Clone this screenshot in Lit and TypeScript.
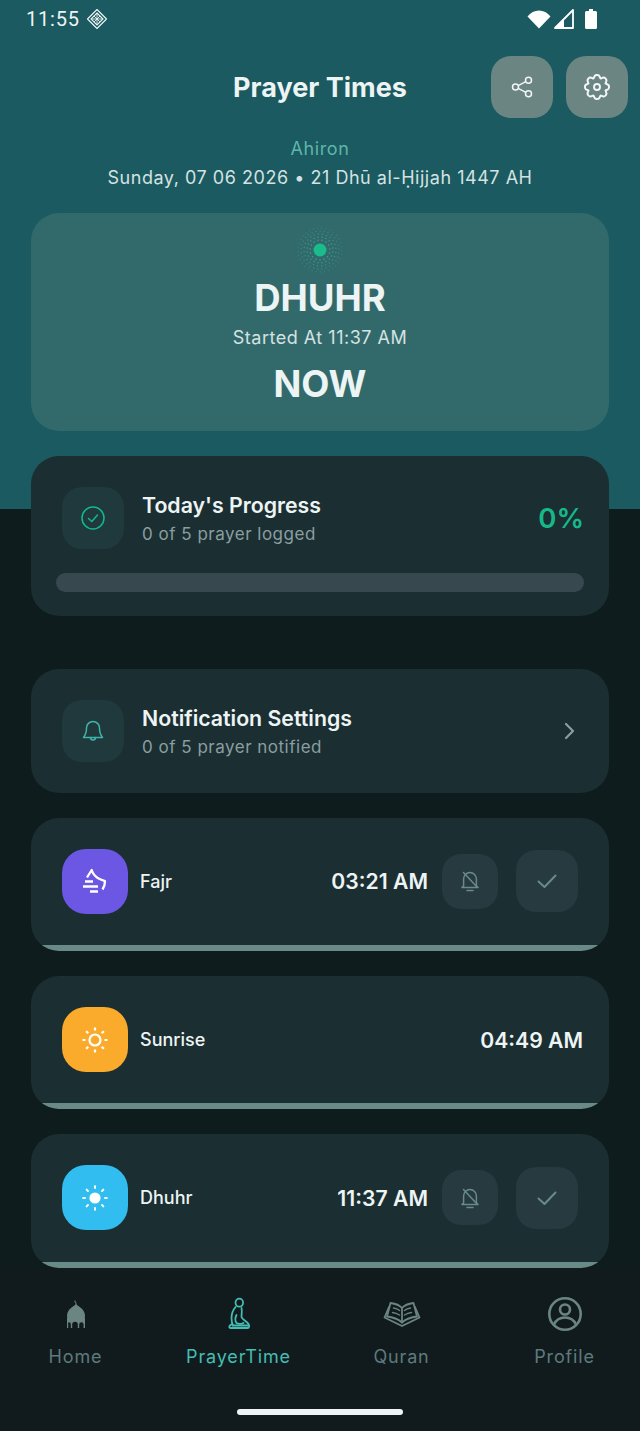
import { LitElement, html, css, svg } from 'lit';
import { customElement } from 'lit/decorators.js';

const gearPath = (cx: number, cy: number, outer: number, inner: number, lobes: number) => {
    let d = '';
    for (let i = 0; i < lobes; i++) {
        const step = (Math.PI * 2) / lobes;
        const a = i * step - Math.PI / 2;
        const pt = (r: number, t: number) => `${(cx + r * Math.cos(t)).toFixed(2)} ${(cy + r * Math.sin(t)).toFixed(2)}`;
        if (i === 0) d += `M${pt(inner, a - step / 2)}`;
        d += `C${pt(inner + 0.6, a - step * 0.36)} ${pt(outer + 0.8, a - step * 0.3)} ${pt(outer, a)}`;
        d += `C${pt(outer + 0.8, a + step * 0.3)} ${pt(inner + 0.6, a + step * 0.36)} ${pt(inner, a + step / 2)}`;
    }
    return d + 'Z';
};

const rays = (cx: number, cy: number, r1: number, r2: number) =>
    [0, 45, 90, 135, 180, 225, 270, 315].map((deg) => {
        const t = (deg * Math.PI) / 180;
        return svg`<line x1=${cx + r1 * Math.cos(t)} y1=${cy + r1 * Math.sin(t)} x2=${cx + r2 * Math.cos(t)} y2=${cy + r2 * Math.sin(t)} />`;
    });

const haloDots = () => {
    const out = [];
    for (const r of [10, 13, 16, 19, 22]) {
        const n = Math.round(r * 1.5);
        for (let i = 0; i < n; i++) {
            const t = (i / n + r / 40) * Math.PI * 2;
            out.push(svg`<circle cx=${25 + r * Math.cos(t)} cy=${25 + r * Math.sin(t)} r="0.75" fill="#3cc9a2" opacity=${0.95 - r / 30} />`);
        }
    }
    return out;
};

const bellOff = html`<svg width="20" height="22" viewBox="0 0 20 22" fill="none" stroke="currentColor" stroke-width="1.5" stroke-linecap="round" stroke-linejoin="round">
    <path d="M3.6 16V9a6.4 6.4 0 0 1 12.8 0v7l1.6 1.4H2z" />
    <path d="M7 20.6h6" />
    <path d="M3.5 2.5 17 17" />
</svg>`;

const checkIcon = html`<svg width="24" height="24" viewBox="0 0 24 24" fill="none" stroke="currentColor" stroke-width="2" stroke-linecap="round" stroke-linejoin="round">
    <path d="M3.5 12.5 9.5 18 20.5 6.5" />
</svg>`;

const moonIcon = html`<svg width="24" height="26" viewBox="0 0 24 26" fill="none" stroke="#fff" stroke-width="2.300" stroke-linejoin="round">
    <path d="M4 9.5 8.700 2c1 3.500 3 6 6 8 2 1.200 4.500 2.200 7.300 3.200 0 3-1 6-2.500 8.300" />
    <path d="M2 13.500h8M0 18.500h15M7 23.500h8" />
</svg>`;

const sunOutline = html`<svg width="28" height="28" viewBox="0 0 28 28" fill="none" stroke="#fff" stroke-width="2.2">
    <circle cx="14" cy="14" r="5.5" />
    ${rays(14, 14, 9.5, 12.5)}
</svg>`;

const sunFilled = html`<svg width="28" height="28" viewBox="0 0 28 28" fill="#fff" stroke="#fff" stroke-width="2" stroke-linecap="round">
    <circle cx="14" cy="14" r="5.6" stroke="none" />
    ${rays(14, 14, 10, 11.8)}
</svg>`;

@customElement('app-root')
export class AppRoot extends LitElement {
    static styles = css`
        :host {
            background: #0f1c1e;
            color: #edf4f4;
            display: flex;
            flex-direction: column;
            font-family: Inter, 'Noto Sans', sans-serif;
            height: 1431px;
            overflow: hidden;
            width: 640px;
        }

        .content {
            background: linear-gradient(#1a5a60 0, #1a5a60 509px, #0f1c1e 509px);
            flex: 1;
            min-height: 0;
            overflow: hidden;
        }

        .status {
            align-items: center;
            display: flex;
            height: 38px;
            padding: 0 43px 0 26px;
        }

        .clock {
            font-family: Roboto, sans-serif;
            font-size: 20px;
            letter-spacing: 0.8px;
            margin-right: 6px;
        }

        .status-right {
            align-items: center;
            display: flex;
            gap: 3px;
            margin-left: auto;
        }

        .header {
            align-items: center;
            display: grid;
            grid-template-columns: 1fr auto 1fr;
            margin-top: 18px;
            padding: 0 12px;
        }

        .title {
            font-size: 27px;
            font-weight: 700;
            grid-column: 2;
        }

        .actions {
            display: flex;
            gap: 13px;
            grid-column: 3;
            justify-content: flex-end;
        }

        .round-btn {
            align-items: center;
            background: #6b8583;
            border-radius: 20px;
            display: flex;
            height: 62px;
            justify-content: center;
            width: 62px;
        }

        .location {
            color: #5fb5aa;
            font-size: 18px;
            letter-spacing: 0.6px;
            line-height: 24px;
            margin-top: 19px;
            text-align: center;
        }

        .date {
            color: #d5e2e2;
            font-size: 18px;
            letter-spacing: 0.53px;
            line-height: 28px;
            margin-top: 3px;
            text-align: center;
        }

        .hero {
            align-items: center;
            background: #326a6c;
            border-radius: 28px;
            box-sizing: border-box;
            display: flex;
            flex-direction: column;
            height: 218px;
            margin: 21px 31px 0;
            padding-top: 12px;
        }

        .hero-name {
            font-size: 36.5px;
            font-weight: 700;
            line-height: 44px;
            margin-top: 1px;
        }

        .hero-sub {
            color: #d5e2e2;
            font-size: 18px;
            letter-spacing: 0.5px;
            line-height: 24px;
            margin-top: 6px;
        }

        .hero-now {
            font-size: 36.5px;
            font-weight: 700;
            line-height: 46px;
            margin-top: 11px;
        }

        .card {
            background: #1b2e32;
            border-radius: 28px;
            box-sizing: border-box;
            margin: 25px 31px 0;
        }

        .progress {
            height: 160px;
            padding: 31px 25px 24px;
        }

        .row {
            align-items: center;
            display: flex;
        }

        .progress .row {
            padding-left: 6px;
        }

        .tile {
            align-items: center;
            background: #1f393d;
            border-radius: 20px;
            display: flex;
            flex: none;
            height: 62px;
            justify-content: center;
            margin-right: 18px;
            width: 62px;
        }

        .heading {
            font-size: 21.3px;
            font-weight: 600;
            line-height: 28px;
        }

        .sub {
            color: #8a9ea0;
            font-size: 17px;
            letter-spacing: 0.5px;
            line-height: 24px;
            margin-top: 3px;
        }

        .percent {
            color: #16b88a;
            font-size: 27.5px;
            font-weight: 600;
            margin-left: auto;
        }

        .bar {
            background: #37494e;
            border-radius: 10px;
            height: 19px;
            margin-top: 24px;
        }

        .notify {
            height: 124px;
            margin-top: 53px;
            padding: 31px;
        }

        .chevron {
            color: #8a9ea0;
            display: flex;
            margin-left: auto;
            margin-right: 1px;
        }

        .prayer {
            display: flex;
            flex-direction: column;
            height: 133.6px;
            margin-top: 24.6px;
            overflow: hidden;
        }

        .prayer .row {
            height: 65px;
            margin-top: 31.4px;
            padding: 0 31px;
        }

        .prayer.plain .row {
            padding-right: 26px;
        }

        .prayer-icon {
            align-items: center;
            border-radius: 24px;
            display: flex;
            flex: none;
            height: 65px;
            justify-content: center;
            margin-right: 12px;
            width: 66px;
        }

        .prayer-name {
            font-size: 18px;
            font-weight: 500;
        }

        .prayer-time {
            font-size: 21.2px;
            font-weight: 600;
            margin-left: auto;
        }

        .bell-btn,
        .check-btn {
            align-items: center;
            background: #263a40;
            color: #6a8a88;
            display: flex;
            flex: none;
            justify-content: center;
        }

        .bell-btn {
            border-radius: 19px;
            height: 55px;
            margin-left: 14px;
            width: 56px;
        }

        .check-btn {
            border-radius: 20px;
            height: 62px;
            margin-left: 18px;
            width: 62px;
        }

        .strip {
            background: #6a8a88;
            height: 6px;
            margin-top: auto;
        }

        .nav {
            background: #111b1e;
            box-sizing: border-box;
            flex: none;
            height: 161px;
            padding-top: 26px;
        }

        .tabs {
            display: grid;
            grid-template-columns: repeat(4, 163px);
            justify-content: center;
        }

        .tab {
            align-items: center;
            color: #5e7a7c;
            display: flex;
            flex-direction: column;
            font-size: 18px;
            letter-spacing: 0.85px;
        }

        .tab.active {
            color: #45bdb2;
        }

        .tab-icon {
            align-items: center;
            display: flex;
            height: 36px;
            justify-content: center;
        }

        .tab-label {
            line-height: 24px;
            margin-top: 13px;
        }

        .home-bar {
            background: #edf4f4;
            border-radius: 3px;
            height: 6px;
            margin: 40px auto 0;
            width: 166px;
        }
    `;

    renderPrayer(name: string, time: string, colour: string, icon: unknown, actions: boolean) {
        return html`
            <div class="card prayer ${actions ? '' : 'plain'}">
                <div class="row">
                    <div class="prayer-icon" style="background: ${colour}">${icon}</div>
                    <span class="prayer-name">${name}</span>
                    <span class="prayer-time">${time}</span>
                    ${actions ? html`
                        <div class="bell-btn">${bellOff}</div>
                        <div class="check-btn">${checkIcon}</div>
                    ` : ''}
                </div>
                <div class="strip"></div>
            </div>
        `;
    }

    render() {
        return html`
            <div class="content">
                <div class="status">
                    <span class="clock">11:55</span>
                    <svg width="22" height="22" viewBox="0 0 22 22" fill="none" stroke="#edf4f4" stroke-width="1.1">
                        <path d="M11 1.5 20.5 11 11 20.5 1.5 11z" stroke-linejoin="round" />
                        <path d="M11 5 17 11 11 17 5 11z" />
                        <path d="M8 8l6 6M14 8l-6 6M11 5v12M5 11h12" stroke-width="0.9" />
                    </svg>
                    <div class="status-right">
                        <svg width="24" height="19" viewBox="0 0 24 19" fill="#fff">
                            <path d="M0.5 6.5C3.5 2.6 7.500 0.5 12 0.500s8.500 2.100 11.500 6L12 18.500z" />
                        </svg>
                        <svg width="20" height="20" viewBox="0 0 20 20" fill="none">
                            <path d="M1 19 19 1v18z" stroke="#fff" stroke-width="1.800" stroke-linejoin="round" />
                            <path d="M1 19 10 10v9z" fill="#fff" />
                        </svg>
                        <svg width="12" height="20" viewBox="0 0 12 20" fill="#fff" style="margin-left: 8px">
                            <path d="M4 0h4v2h2.500A1.500 1.500 0 0 1 12 3.500V18.500a1.500 1.500 0 0 1-1.500 1.500h-9A1.500 1.500 0 0 1 0 18.500V3.500A1.500 1.500 0 0 1 1.500 2H4z" />
                        </svg>
                    </div>
                </div>

                <div class="header">
                    <div class="title">Prayer Times</div>
                    <div class="actions">
                        <div class="round-btn">
                            <svg width="24" height="24" viewBox="0 0 24 24" fill="none" stroke="#f2f6f6" stroke-width="1.500">
                                <circle cx="5.500" cy="12" r="3" />
                                <circle cx="18.500" cy="5.300" r="3" />
                                <circle cx="18.500" cy="18.700" r="3" />
                                <path d="M8.200 10.600 15.800 6.700M8.200 13.400l7.600 3.900" />
                            </svg>
                        </div>
                        <div class="round-btn">
                            <svg width="28" height="28" viewBox="0 0 28 28" fill="none" stroke="#f2f6f6" stroke-width="1.900" stroke-linejoin="round">
                                <path d=${gearPath(14, 14, 12, 9.2, 8)} />
                                <circle cx="14" cy="14" r="3" />
                            </svg>
                        </div>
                    </div>
                </div>

                <div class="location">Ahiron</div>
                <div class="date">Sunday, 07 06 2026 • 21 Dhū al-Ḥijjah 1447 AH</div>

                <div class="hero">
                    <svg width="50" height="50" viewBox="0 0 50 50">
                        ${haloDots()}
                        <circle cx="25" cy="25" r="6.500" fill="#1abc8c" />
                    </svg>
                    <div class="hero-name">DHUHR</div>
                    <div class="hero-sub">Started At 11:37 AM</div>
                    <div class="hero-now">NOW</div>
                </div>

                <div class="card progress">
                    <div class="row">
                        <div class="tile">
                            <svg width="26" height="26" viewBox="0 0 26 26" fill="none" stroke="#16b88a" stroke-width="1.500" stroke-linecap="round" stroke-linejoin="round">
                                <circle cx="13" cy="13" r="11" />
                                <path d="M8.500 13.500 11.800 16.500 17.500 10" />
                            </svg>
                        </div>
                        <div>
                            <div class="heading">Today's Progress</div>
                            <div class="sub">0 of 5 prayer logged</div>
                        </div>
                        <span class="percent">0%</span>
                    </div>
                    <div class="bar"></div>
                </div>

                <div class="card notify">
                    <div class="row">
                        <div class="tile">
                            <svg width="24" height="24" viewBox="0 0 24 24" fill="none" stroke="#3fb5aa" stroke-width="1.500" stroke-linecap="round" stroke-linejoin="round">
                                <path d="M12 2.500a6.500 6.500 0 0 0-6.500 6.500c0 5-1 7-3 9.500h19c-2-2.500-3-4.500-3-9.500A6.500 6.500 0 0 0 12 2.500z" />
                                <path d="M9.500 18.500a2.500 2.500 0 0 0 5 0" />
                            </svg>
                        </div>
                        <div>
                            <div class="heading">Notification Settings</div>
                            <div class="sub">0 of 5 prayer notified</div>
                        </div>
                        <span class="chevron">
                            <svg width="14" height="20" viewBox="0 0 14 20" fill="none" stroke="currentColor" stroke-width="2.200" stroke-linecap="round" stroke-linejoin="round">
                                <path d="M3 3l7 7-7 7" />
                            </svg>
                        </span>
                    </div>
                </div>

                ${this.renderPrayer('Fajr', '03:21 AM', '#6b57e3', moonIcon, true)}
                ${this.renderPrayer('Sunrise', '04:49 AM', '#fbab2c', sunOutline, false)}
                ${this.renderPrayer('Dhuhr', '11:37 AM', '#31bdf0', sunFilled, true)}
            </div>

            <div class="nav">
                <div class="tabs">
                    <div class="tab">
                        <div class="tab-icon">
                            <svg width="22" height="30" viewBox="0 0 22 30" fill="#6b8583">
                                <path d="M10.200 1.500a1.600 1.600 0 0 0 .8 2.500 1.800 1.800 0 0 1-.8-2.500z" stroke="#6b8583" stroke-width="0.600" />
                                <path d="M10.600 3.500h.8v2h-.8z" />
                                <path d="M11 4.500c.6 1.800 3 2.700 5 4.500 2.400 2 4 4.500 4 8 0 .8-.2 1.500-.5 2h-17c-.3-.5-.5-1.200-.5-2 0-3.500 1.600-6 4-8 2-1.800 4.400-2.700 5-4.500z" />
                                <path d="M2 18.500h18V29h-1.400v-3.500a2.200 2.200 0 0 0-4.400 0V29h-1.400v-3.500a2.800 2.800 0 0 0-5.600 0V29H5.800v-3.500a2.200 2.200 0 0 0-2.600-2.100V29H2z" />
                            </svg>
                        </div>
                        <span class="tab-label">Home</span>
                    </div>
                    <div class="tab active">
                        <div class="tab-icon">
                            <svg width="24" height="34" viewBox="0 0 24 34" fill="none" stroke="currentColor" stroke-width="1.800" stroke-linecap="round" stroke-linejoin="round">
                                <ellipse cx="12.300" cy="5.700" rx="3.800" ry="4" />
                                <path d="M8.500 10C6 13 4.500 17 4.500 21c0 3 .5 5.500 1.500 7.500" />
                                <path d="M14.500 11c.8 3 0 6 0 9 1 3 5 4 7 7 1 1.500 1 4-1 4H3.500c-1.500 0-1.500-1.500-.5-2.500l2-1.500" />
                                <path d="M9.500 18c-1.500 3-1.500 6 0 8 2 1.500 6 1 7 0" />
                                <path d="M6 28.500h15" />
                            </svg>
                        </div>
                        <span class="tab-label">PrayerTime</span>
                    </div>
                    <div class="tab">
                        <div class="tab-icon">
                            <svg width="38" height="26" viewBox="0 0 38 26" fill="none" stroke="#6b8583" stroke-width="1.800" stroke-linejoin="round" stroke-linecap="round">
                                <path d="M19 7C16 3.500 11.500 2.500 7.500 2L4 15.500c5 .5 11 2.500 15 6 4-3.500 10-5.500 15-6L30.500 2C26.500 2.500 22 3.500 19 7z" />
                                <path d="M19 7v14.500" />
                                <path d="M6 6 1.500 16.500 19 25l17.500-8.500L32 6" />
                                <path d="M10.500 7c2.500.3 4.500 1.200 6 2.500M9.500 11.500c2.500.3 5 1.200 7 2.500M27.500 7c-2.500.3-4.500 1.200-6 2.500M28.500 11.500c-2.500.3-5 1.200-7 2.500" stroke-width="1.400" />
                            </svg>
                        </div>
                        <span class="tab-label">Quran</span>
                    </div>
                    <div class="tab">
                        <div class="tab-icon">
                            <svg width="36" height="36" viewBox="0 0 36 36" fill="none" stroke="#6b8583" stroke-width="2.600">
                                <circle cx="18" cy="18" r="15.700" />
                                <circle cx="18" cy="13.500" r="5" />
                                <path d="M7 28.500c2-4.500 6.200-7 11-7s9 2.500 11 7" />
                            </svg>
                        </div>
                        <span class="tab-label">Profile</span>
                    </div>
                </div>
                <div class="home-bar"></div>
            </div>
        `;
    }
}
